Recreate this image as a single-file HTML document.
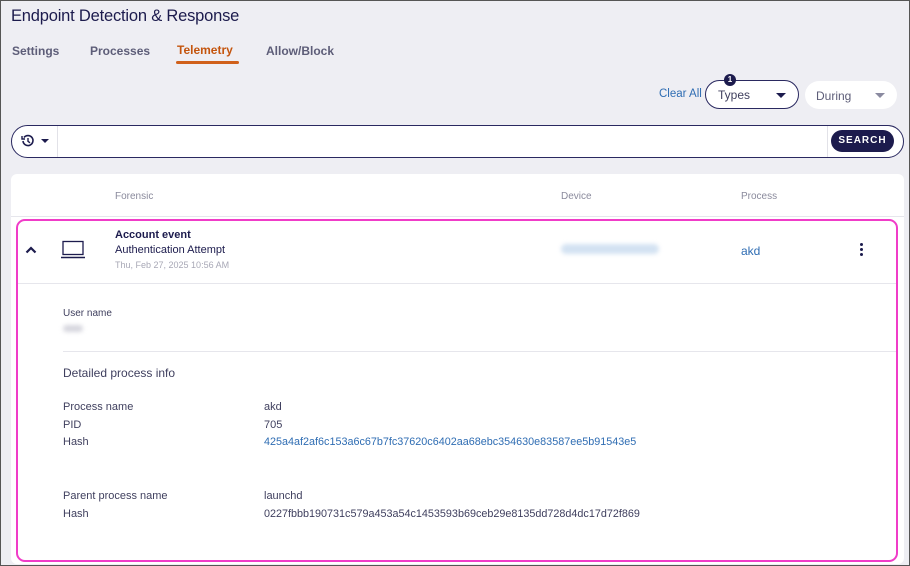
<!DOCTYPE html>
<html><head><style>
*{box-sizing:border-box;margin:0;padding:0}
body{width:910px;height:566px;overflow:hidden;background:#eeeef3;font-family:"Liberation Sans",sans-serif;color:#1c1b4d;position:relative;border:1px solid #555;}
.a{position:absolute;white-space:nowrap}
</style></head><body>
<div class="a" style="left:10px;top:6px;font-size:16.5px;letter-spacing:-0.2px;color:#1c1b4d">Endpoint Detection &amp; Response</div>
<div class="a" style="left:11px;top:43px;font-size:12px;font-weight:bold;color:#5d5d78">Settings</div>
<div class="a" style="left:89px;top:43px;font-size:12px;font-weight:bold;color:#5d5d78">Processes</div>
<div class="a" style="left:176px;top:42px;font-size:12px;font-weight:bold;color:#c4550e">Telemetry</div>
<div class="a" style="left:175px;top:60px;width:63px;height:3px;background:#d0601a;border-radius:2px"></div>
<div class="a" style="left:265px;top:43px;font-size:12px;font-weight:bold;color:#5d5d78">Allow/Block</div>

<div class="a" style="left:658px;top:87px;font-size:11.5px;color:#2f6db3">Clear All</div>
<div class="a" style="left:704px;top:79px;width:94px;height:29px;border:1px solid #2a2960;border-radius:15px;background:#fff"></div>
<div class="a" style="left:723px;top:73px;width:12px;height:12px;border-radius:6px;background:#1c1b4d;color:#fff;font-size:8px;text-align:center;line-height:12px;font-weight:bold">1</div>
<div class="a" style="left:717px;top:87px;font-size:12px;color:#3f3f5e">Types</div>
<div class="a" style="left:775px;top:92px;border-left:5px solid transparent;border-right:5px solid transparent;border-top:5px solid #1c1b4d"></div>
<div class="a" style="left:804px;top:80px;width:92px;height:28px;border-radius:14px;background:#fff"></div>
<div class="a" style="left:815px;top:88px;font-size:12px;color:#5d5d78">During</div>
<div class="a" style="left:874px;top:92px;border-left:5px solid transparent;border-right:5px solid transparent;border-top:5px solid #8a8aa0"></div>

<div class="a" style="left:10px;top:124px;width:893px;height:33px;border:1px solid #2a2960;border-radius:17px;background:#fff"></div>
<div class="a" style="left:56px;top:125px;width:1px;height:31px;background:#e2e2e8"></div>
<div class="a" style="left:826px;top:125px;width:1px;height:31px;background:#e2e2e8"></div>
<svg class="a" style="left:20px;top:133px" width="14" height="14" viewBox="0 0 14 14"><path d="M3 3.5A5 5 0 1 1 2 7" fill="none" stroke="#1c1b4d" stroke-width="1.6"/><path d="M1 2v3h3" fill="none" stroke="#1c1b4d" stroke-width="1.4"/><path d="M7 4v3.3l2 1.5" fill="none" stroke="#1c1b4d" stroke-width="1.4"/></svg>
<div class="a" style="left:40px;top:138px;border-left:4px solid transparent;border-right:4px solid transparent;border-top:4px solid #1c1b4d"></div>
<div class="a" style="left:830px;top:129px;width:63px;height:22px;border-radius:11px;background:#1c1b4d;color:#fff;font-size:10px;font-weight:bold;letter-spacing:1px;text-align:center;line-height:22px">SEARCH</div>

<div class="a" style="left:10px;top:173px;width:893px;height:390px;background:#fff;border-radius:6px"></div>
<div class="a" style="left:114px;top:190px;font-size:10px;color:#8a8a9c">Forensic</div>
<div class="a" style="left:560px;top:190px;font-size:10px;color:#8a8a9c">Device</div>
<div class="a" style="left:740px;top:190px;font-size:10px;color:#8a8a9c">Process</div>
<div class="a" style="left:10px;top:215px;width:893px;height:1px;background:#e6e6ec"></div>

<div class="a" style="left:15px;top:218px;width:882px;height:343px;border:2px solid #f03cc8;border-radius:9px"></div>
<svg class="a" style="left:24px;top:245px" width="12" height="8" viewBox="0 0 12 8"><path d="M1.5 6.5L6 2l4.5 4.5" fill="none" stroke="#1c1b4d" stroke-width="2.2"/></svg>
<svg class="a" style="left:59px;top:239px" width="26" height="19" viewBox="0 0 26 19"><rect x="3" y="1.5" width="20" height="13" fill="none" stroke="#1c1b4d" stroke-width="1.3"/><path d="M1 17.5h24" stroke="#1c1b4d" stroke-width="1.5"/></svg>
<div class="a" style="left:114px;top:228px;font-size:11px;font-weight:bold">Account event</div>
<div class="a" style="left:114px;top:243px;font-size:11px">Authentication Attempt</div>
<div class="a" style="left:114px;top:259px;font-size:9px;color:#a8a8b6">Thu, Feb 27, 2025 10:56 AM</div>
<div class="a" style="left:560px;top:243px;width:98px;height:10px;background:#d3e2f2;border-radius:5px;filter:blur(2px)"></div>
<div class="a" style="left:740px;top:243px;font-size:12px;color:#2f6db3">akd</div>
<div class="a" style="left:859px;top:242px;width:3px;height:3px;border-radius:2px;background:#1c1b4d;box-shadow:0 5px 0 #1c1b4d,0 10px 0 #1c1b4d"></div>
<div class="a" style="left:17px;top:282px;width:878px;height:1px;background:#e6e6ec"></div>

<div class="a" style="left:62px;top:307px;font-size:10px;color:#3f3f5e">User name</div>
<div class="a" style="left:62px;top:324px;width:20px;height:7px;background:#d6d6de;border-radius:4px;filter:blur(2px)"></div>
<div class="a" style="left:62px;top:350px;width:833px;height:1px;background:#e6e6ec"></div>
<div class="a" style="left:62px;top:365px;font-size:12px;color:#3f3f5e">Detailed process info</div>
<div class="a" style="left:62px;top:400px;font-size:11px;color:#3f3f5e">Process name</div>
<div class="a" style="left:62px;top:418px;font-size:11px;color:#3f3f5e">PID</div>
<div class="a" style="left:62px;top:435px;font-size:11px;color:#3f3f5e">Hash</div>
<div class="a" style="left:263px;top:400px;font-size:11px;color:#3f3f5e">akd</div>
<div class="a" style="left:263px;top:418px;font-size:11px;color:#3f3f5e">705</div>
<div class="a" style="left:263px;top:435px;font-size:10.8px;color:#2f6db3">425a4af2af6c153a6c67b7fc37620c6402aa68ebc354630e83587ee5b91543e5</div>
<div class="a" style="left:62px;top:489px;font-size:11px;color:#3f3f5e">Parent process name</div>
<div class="a" style="left:62px;top:507px;font-size:11px;color:#3f3f5e">Hash</div>
<div class="a" style="left:263px;top:489px;font-size:11px;color:#3f3f5e">launchd</div>
<div class="a" style="left:263px;top:507px;font-size:10.8px;color:#3f3f5e">0227fbbb190731c579a453a54c1453593b69ceb29e8135dd728d4dc17d72f869</div>
</body></html>
